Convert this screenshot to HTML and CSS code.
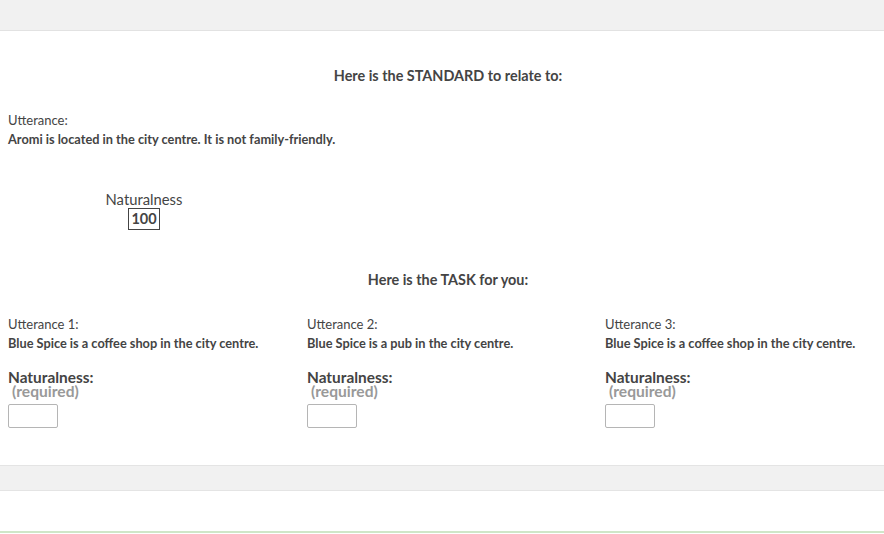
FILE: index.html
```html
<!DOCTYPE html>
<html>
<head>
<meta charset="utf-8">
<link rel="stylesheet" href="styles.css">
</head>
<body>
<div class="topbar"></div>
<main class="page">
  <h2 class="section-title std-title">Here is the STANDARD to relate to:</h2>
  <div class="utt">
    <div class="utt-label">Utterance:</div>
    <div class="utt-text">Aromi is located in the city centre. It is not family-friendly.</div>
  </div>
  <div class="std-score">
    <div class="std-name">Naturalness</div>
    <div class="std-value">100</div>
  </div>
  <h2 class="section-title task-title">Here is the TASK for you:</h2>
  <div class="tasks">
    <div class="task">
      <div class="utt-label">Utterance 1:</div>
      <div class="utt-text">Blue Spice is a coffee shop in the city centre.</div>
      <div class="q-label">Naturalness:</div>
      <div class="q-req">(required)</div>
      <input class="q-input" type="text">
    </div>
    <div class="task">
      <div class="utt-label">Utterance 2:</div>
      <div class="utt-text">Blue Spice is a pub in the city centre.</div>
      <div class="q-label">Naturalness:</div>
      <div class="q-req">(required)</div>
      <input class="q-input" type="text">
    </div>
    <div class="task">
      <div class="utt-label">Utterance 3:</div>
      <div class="utt-text">Blue Spice is a coffee shop in the city centre.</div>
      <div class="q-label">Naturalness:</div>
      <div class="q-req">(required)</div>
      <input class="q-input" type="text">
    </div>
  </div>
</main>
<div class="bottombar"></div>
<div class="footer"></div>
</body>
</html>
```
FILE: styles.css
```css
html, body {
  margin: 0;
  padding: 0;
  overflow: hidden;
}
body {
  width: 884px;
  height: 534px;
  font-family: Lato, "Open Sans", sans-serif;
  color: #444;
  background: #fff;
}
.topbar {
  height: 30px;
  background: #f1f1f1;
  border-bottom: 1px solid #e2e2e2;
}
.page {
  width: 880px;
  padding: 0 0 0 8px;
}
.section-title {
  margin: 0;
  font-size: 14.4px;
  font-weight: 700;
  text-align: center;
  line-height: 18px;
  color: #444;
}
.std-title {
  padding-top: 36px;
}
.utt {
  margin-top: 26px;
}
.utt-label {
  font-size: 13px;
  line-height: 19px;
  color: #444;
}
.utt-text {
  font-size: 12.75px;
  font-weight: 700;
  line-height: 19px;
  color: #444;
}
.std-score {
  margin-top: 41px;
  width: 272px;
  display: flex;
  flex-direction: column;
  align-items: center;
}
.std-name {
  font-size: 14.8px;
  line-height: 18px;
}
.std-value {
  font-size: 14.5px;
  font-weight: 700;
  line-height: 20px;
  padding: 0 2px;
  border: 1px solid #444;
}
.task-title {
  margin-top: 41px;
}
.tasks {
  margin-top: 26px;
  display: grid;
  grid-template-columns: 299px 298px 298px;
}
.task {
  display: flex;
  flex-direction: column;
  align-items: flex-start;
}
.q-label {
  margin-top: 17px;
  font-size: 15.4px;
  font-weight: 700;
  line-height: 14px;
  color: #444;
}
.q-req {
  font-size: 15.6px;
  font-weight: 700;
  line-height: 14px;
  color: #999;
  padding-left: 4px;
}
.q-input {
  margin: 6px 0 0 0;
  width: 50px;
  height: 24px;
  box-sizing: border-box;
  border: 1px solid #b5b5b5;
  border-radius: 2px;
  background: #fff;
  padding: 0;
}
.bottombar {
  margin-top: 37px;
  height: 24px;
  background: #f1f1f1;
  border-top: 1px solid #e4e4e4;
  border-bottom: 1px solid #e4e4e4;
}
.footer {
  height: 40px;
  border-bottom: 2px solid #cfe6c8;
}
```
